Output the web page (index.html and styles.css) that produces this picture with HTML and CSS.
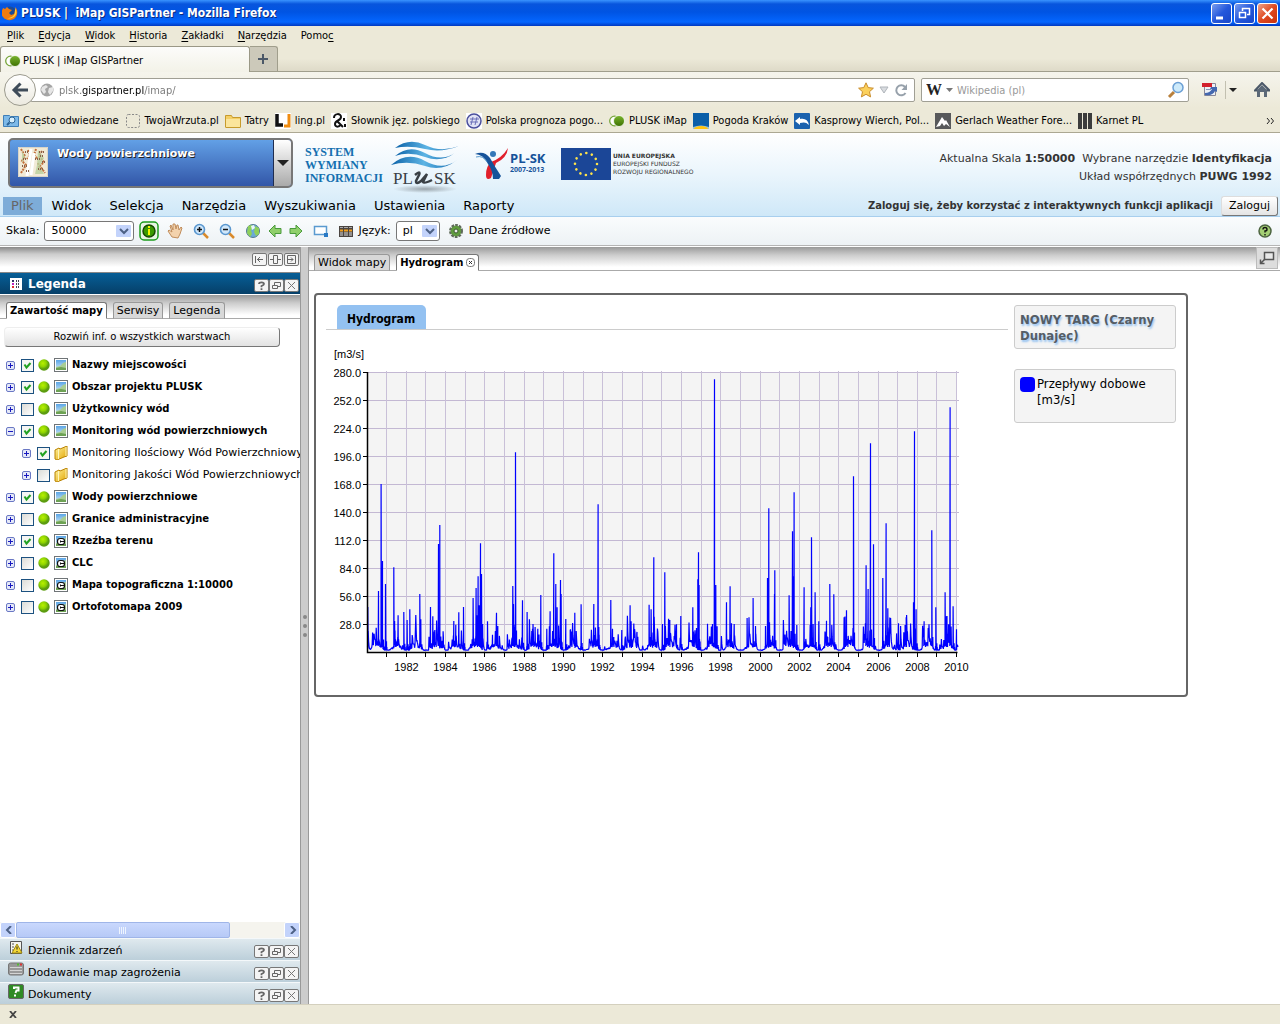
FILE: index.html
```html
<!DOCTYPE html>
<html lang="pl">
<head>
<meta charset="utf-8">
<title>PLUSK | iMap GISPartner</title>
<link rel="stylesheet" href="styles.css">
</head>
<body>
<svg class="sprite" aria-hidden="true">
  <defs>
    <linearGradient id="gGreen" x1="0" x2="0" y1="0" y2="1"><stop offset="0" stop-color="#7bb52f"/><stop offset="1" stop-color="#3c7000"/></linearGradient>
    <linearGradient id="gSky" x1="0" x2="0" y1="0" y2="1"><stop offset="0" stop-color="#5aa5e6"/><stop offset="1" stop-color="#d8ecf8"/></linearGradient>
    <linearGradient id="gGold" x1="0" x2="1" y1="0" y2="1"><stop offset="0" stop-color="#fff3a0"/><stop offset="1" stop-color="#e2a400"/></linearGradient>
    <linearGradient id="gBlue" x1="0" x2="1"><stop offset="0" stop-color="#0b62a8"/><stop offset=".5" stop-color="#5db4e4"/><stop offset="1" stop-color="#0e67ad"/></linearGradient>
    <radialGradient id="gBall" cx=".4" cy=".35"><stop offset="0" stop-color="#b8f000"/><stop offset=".6" stop-color="#8fd400"/><stop offset="1" stop-color="#5c9c10"/></radialGradient>
    <radialGradient id="gShade"><stop offset="0" stop-color="#9aa5ac"/><stop offset="1" stop-color="#9aa5ac" stop-opacity="0"/></radialGradient>
  </defs>
  <symbol id="imap" viewBox="0 0 16 16"><circle cx="5.500" cy="8" r="4.800" fill="#fff" stroke="#78a63c" stroke-width="1.300"/><circle cx="10" cy="8" r="5.500" fill="url(#gGreen)" stroke="#fff" stroke-width=".8"/></symbol>
  <symbol id="firefox" viewBox="0 0 16 16"><circle cx="8" cy="8" r="6.500" fill="#1c4c96"/><path d="M1 3l2 1 2-2 2 2 3 1-2 2-1 1 2 2 3-1 1-4 1 1-1-4c3 2 3 8 0 11s-9 3-12-1S0 6 1 3z" fill="#f07c12"/><path d="M13 3c2 3 2 6 0 8s-5 3-8 2c4 0 7-2 8-5z" fill="#ffcf3a"/></symbol>
  <symbol id="folder" viewBox="0 0 16 16"><path d="M.5 14V2.500h6l1 2h8V14q0 .5-.5.5H1q-.5 0-.5-.5z" fill="#f4cf66" stroke="#c79b2c"/><path d="M1 6h14v8H1z" fill="#fbe59b"/></symbol>
  <symbol id="plus" viewBox="0 0 9 9"><rect x=".5" y=".5" width="8" height="8" rx="1.500" fill="#e4e8f8" stroke="#6a78c4"/><path d="M2 4.500h5M4.500 2v5" stroke="#1818c0"/></symbol>
  <symbol id="minus" viewBox="0 0 9 9"><rect x=".5" y=".5" width="8" height="8" rx="1.500" fill="#e4e8f8" stroke="#6a78c4"/><path d="M2 4.500h5" stroke="#1818c0"/></symbol>
  <symbol id="ball" viewBox="0 0 12 12"><circle cx="6" cy="6" r="5.700" fill="url(#gBall)"/></symbol>
  <symbol id="pic" viewBox="0 0 14 14"><rect x=".5" y=".5" width="13" height="13" fill="#fff" stroke="#6f7477"/><path d="M2 2h10v10H2z" fill="url(#gSky)"/><path d="M2 9l4-1 3-3 3-1v8H2z" fill="#a9cd94"/><path d="M2 10l5-1 5 1v2H2z" fill="#6da254"/></symbol>
  <symbol id="wms" viewBox="0 0 14 14"><use href="#pic"/><rect x="3.500" y="4.500" width="7" height="6" rx="2.500" fill="#fff" stroke="#111" stroke-width="1.200"/><path d="M6.500 7.500H11M6.500 6.500v2" stroke="#111"/></symbol>
  <symbol id="dir" viewBox="0 0 14 14"><path d="M1 4l4-2 1 1 7-3v10l-3 1-7 3-2-1z" fill="url(#gGold)" stroke="#b98200"/><path d="M4.500 3v10M12 1v9" stroke="#fff6b8"/></symbol>
  <symbol id="help" viewBox="0 0 15 13"><rect x=".5" y=".5" width="14" height="12" rx="1.500" fill="#f4f4f4" stroke="#777"/><path d="M5 5Q5 3.300 7.500 3.300T10 5Q10 6 7.500 7v1.300M7.500 9.300v1.700" stroke="#666" stroke-width="1.800" fill="none"/></symbol>
  <symbol id="float" viewBox="0 0 15 13"><rect x=".5" y=".5" width="14" height="12" rx="1.500" fill="#f4f4f4" stroke="#777"/><path d="M5.500 6V3.500h6v4H9M3.500 6.500h5v3h-5z" stroke="#666" fill="none"/></symbol>
  <symbol id="close" viewBox="0 0 15 13"><rect x=".5" y=".5" width="14" height="12" rx="1.500" fill="#f4f4f4" stroke="#777"/><path d="M4 3l7 7M11 3l-7 7" stroke="#777"/></symbol>
  <symbol id="lens" viewBox="0 0 16 16"><path d="M10 10l5 5" stroke="#d98a2c" stroke-width="2.500"/><circle cx="6.500" cy="6.500" r="5" fill="#cfe7fb" stroke="#5a97cf" stroke-width="1.600"/></symbol>
</svg>

<header class="browser">
  <div class="titlebar">
    <svg width="16" height="16"><use href="#firefox"/></svg>
    <span class="wintitle">PLUSK | &nbsp;iMap GISPartner - Mozilla Firefox</span>
    <button class="win" aria-label="Minimalizuj"><svg width="19" height="19"><path d="M4 14h7" stroke="#fff" stroke-width="3"/></svg></button>
    <button class="win" aria-label="Przywróć"><svg width="19" height="19"><path d="M7.500 7V4.500h7v6H12M4.500 8.500h6v5h-6z" fill="none" stroke="#fff" stroke-width="1.500"/></svg></button>
    <button class="win quit" aria-label="Zamknij"><svg width="19" height="19"><path d="M4.500 4.500l10 10M14.500 4.500l-10 10" stroke="#fff" stroke-width="2.200"/></svg></button>
  </div>
  <nav class="ffmenu">
    <a href="#"><u>P</u>lik</a><a href="#"><u>E</u>dycja</a><a href="#"><u>W</u>idok</a><a href="#"><u>H</u>istoria</a><a href="#"><u>Z</u>akładki</a><a href="#"><u>N</u>arzędzia</a><a href="#">Pomo<u>c</u></a>
  </nav>
  <div class="fftabs">
    <button class="fftab"><svg width="16" height="16"><use href="#imap"/></svg>PLUSK | iMap GISPartner</button>
    <button class="newtab" aria-label="Nowa karta"><svg width="12" height="12"><path d="M1 6h10M6 1v10" stroke="#4b5868" stroke-width="2"/></svg></button>
  </div>
  <div class="navbar">
    <button class="back" aria-label="Wstecz"><svg width="18" height="18"><path d="M9.500 2.500L3 9l6.500 6.500M3.500 9H17" fill="none" stroke="#3e4b59" stroke-width="3"/></svg></button>
    <div class="urlbar">
      <svg width="14" height="14"><circle cx="7" cy="7" r="6.500" fill="#a5a5a5"/><path d="M2 4l4-2 2 2-3 2 1 3-2 2-3-4zM9 5l4-1v4l-3 4-2-3z" fill="#e6e6e6"/></svg>
      <input class="url" type="text" aria-label="Adres" value="plsk.gispartner.pl/imap/">
      <svg width="16" height="16"><path d="M8 .8l2.200 4.800 5.200.6-3.900 3.500 1.100 5.200L8 12.300l-4.600 2.600 1.100-5.200L.6 6.200l5.200-.6z" fill="#fbd05c" stroke="#c98d2c"/></svg>
      <svg width="10" height="16"><path d="M1 5h8L5 11z" fill="#d9dce0" stroke="#b0b5bb"/></svg>
      <svg width="14" height="14"><path d="M11.500 10A5 5 0 1 1 11 4" fill="none" stroke="#97a1ab" stroke-width="2"/><path d="M13 1v6H7.500z" fill="#97a1ab"/></svg>
    </div>
    <div class="search">
      <svg width="16" height="16"><text x="0" y="13" class="wiki">W</text></svg>
      <svg width="7" height="5"><path d="M0 0h7L3.500 4z" fill="#777"/></svg>
      <input class="query" type="text" aria-label="Szukaj" placeholder="Wikipedia (pl)">
      <svg width="18" height="18"><path d="M7 11l-5 5" stroke="#b9803c" stroke-width="3"/><circle cx="11" cy="6.500" r="5" fill="#cdeafa" stroke="#6b9fd4" stroke-width="1.500"/></svg>
    </div>
    <svg class="pdf" width="16" height="16"><path d="M2.500 1.500h11v12h-11z" fill="#eef1f6" stroke="#889"/><path d="M0 1h10v4H0z" fill="#d2202c"/><path d="M4 7.500h5" stroke="#8898b8"/><path d="M3 11q5 0 7-4H8l1-2h6v5l-2-1q-2 5-10 4z" fill="#4468b0"/></svg>
    <svg class="drop" width="12" height="18"><path d="M.5 0v18" stroke="#c2c0b0"/><path d="M4 7h8l-4 4z" fill="#222"/></svg>
    <svg class="home" width="16" height="16"><path d="M8 1l7.500 7.500H1z" fill="none" stroke="#4b5868" stroke-width="2"/><path d="M3 8l5-5 5 5v7h-3v-5H6v5H3z" fill="#5b6877"/></svg>
  </div>
  <nav class="bookmarks">
    <a href="#"><svg width="16" height="16"><path d="M.5 13.500v-11h6l1 1h8v10z" fill="#7db9e8" stroke="#3f7fb8"/><circle cx="9" cy="7" r="3" fill="#d8effc" stroke="#2c6496"/><path d="M6.500 9.500L4 12" stroke="#2c6496" stroke-width="2"/></svg><span>Często odwiedzane</span></a>
    <a href="#"><svg width="16" height="16"><rect x="1.500" y="1.500" width="13" height="13" rx="2" fill="none" stroke="#888" stroke-dasharray="2 1.500"/></svg><span>TwojaWrzuta.pl</span></a>
    <a href="#"><svg width="16" height="16"><use href="#folder"/></svg><span>Tatry</span></a>
    <a href="#"><svg width="16" height="16"><path fill="#fff" d="M0 0h16v16H0z"/><path d="M2 1v11h6" fill="none" stroke="#111" stroke-width="3.500"/><path d="M14 1v12H9" fill="none" stroke="#f08c10" stroke-width="3"/></svg><span>ling.pl</span></a>
    <a href="#"><svg width="16" height="16"><path fill="#fff" d="M0 0h16v16H0z"/><path d="M3 5c0-5 7-5 7-1S4 7 4 11s5 3 6 0M6 8l6 6M13 5v3M14 11v3" fill="none" stroke="#111" stroke-width="2"/></svg><span>Słownik jęz. polskiego</span></a>
    <a href="#"><svg width="16" height="16"><path fill="#fff" d="M0 0h16v16H0z"/><circle cx="8" cy="8" r="7" fill="#e0e2f4" stroke="#4a4f9c" stroke-width="1.500"/><path d="M4 6h9M4 9h8M7 4l-2 8M11 4l-2 8" stroke="#6a6fb8"/></svg><span>Polska prognoza pogo...</span></a>
    <a href="#"><svg width="16" height="16"><use href="#imap"/></svg><span>PLUSK iMap</span></a>
    <a href="#"><svg width="16" height="16"><path fill="#0b5fa8" d="M0 0h16v16H0z"/><path fill="#9cc3d8" d="M0 14q8-3 16 0v2H0z"/><ellipse cx="8" cy="16" rx="7" ry="3" fill="#ffc410"/></svg><span>Pogoda Kraków</span></a>
    <a href="#"><svg width="16" height="16"><rect width="16" height="16" rx="1" fill="#1a62ae"/><path d="M1 8l5-4v2c5-1 8 1 9 6-3-3-5-3-9-2v2z" fill="#fff"/></svg><span>Kasprowy Wierch, Pol...</span></a>
    <a href="#"><svg width="16" height="16"><path fill="#58595b" d="M0 0h16v16H0z"/><path d="M1 14l6-10 3 4 1-1 4 7-4-3-2 2-2-3-2 3z" fill="#fff"/></svg><span>Gerlach Weather Fore...</span></a>
    <a href="#"><svg width="14" height="16"><path d="M0 0h4v16H0zM5 0h4v16H5zM10 0h4v16h-4z" fill="#3c3c3c"/></svg><span>Karnet PL</span></a>
    <button class="more" aria-label="Więcej zakładek"><svg width="8" height="6"><path d="M1 0l2.500 3L1 6M5 0l2.500 3L5 6" fill="none" stroke="#222"/></svg></button>
  </nav>
</header>

<div class="app">
  <header class="apphead">
    <div class="brand">
      <button class="theme">
        <span class="themeface"><svg class="thumb" width="30" height="30"><path fill="#f1ead6" d="M0 0h30v30H0z"/><path d="M3 2l4 7-3 5 4 4-5 8M24 4l-3 5 5 6-4 4 5 7M18 2l-2 6 4 4M10 3l2 5-3 4M20 16l3 9" fill="none" stroke="#c2703c" stroke-width="2" stroke-dasharray="2 1"/><path d="M20 3l6 8-4 8 4 8h-9l2-9zM4 4l3 6-3 6z" fill="#b9cf9c" opacity=".8"/><path d="M13 2l-4 27M16 6l-3 22" stroke="#fff" stroke-width="3"/><path d="M7 5h3M5 12h3M22 9h3M20 22h5M8 24h3M4 19h5M24 15h3M17 12h5M21 5h5" stroke="#8a6048" stroke-dasharray="1 1" stroke-width="2"/><path d="M.5.500h29v29H.5z" fill="none" stroke="#d8d4c8"/></svg><b>Wody powierzchniowe</b></span>
        <span class="themearrow"><svg width="12" height="6"><path d="M0 0h12L6 6z" fill="#222"/></svg></span>
      </button>
      <p class="motto">SYSTEM<br>WYMIANY<br>INFORMACJI</p>
      <svg class="plusk" width="72" height="52" role="img" aria-label="PLUSK">
        <g fill="url(#gBlue)"><path d="M4 7Q18-4 34 4t34 1Q50 12 34 8T4 7z"/><path d="M4 15Q18 3 34 12t30 0q-14 10-30 4T4 15z"/><path d="M0 24Q16 10 34 20t32-1q-15 12-32 6T0 24z"/></g>
        <text x="2" y="43" class="lpl">PL</text><text x="43" y="43" class="lpl">SK</text><path d="M24 34q6-5 4 0l-3 6q0 4 5 0l6-7-4 8q1 2 9-2" fill="none" stroke="#3a4045" stroke-width="2.500"/>
        <ellipse cx="34" cy="48" rx="32" ry="4" fill="url(#gShade)"/>
      </svg>
      <svg class="plsk" width="72" height="36" role="img" aria-label="PL-SK 2007-2013">
        <path d="M33 2q-1 10-12 15-2 6-5 15-5 3-5-3 0-9 5-13 11-4 17-14z" fill="#e1202c"/><path d="M0 8q9-4 15 4 5 9 11 18l-2 3h-6q0-8-5-15Q8 8 0 8z" fill="#16539a"/><circle cx="18" cy="8" r="3" fill="#3478b8"/><path d="M1 11q7-2 11 5" fill="none" stroke="#5a9acc"/>
        <text x="35" y="17" class="lsk">PL-SK</text><text x="35" y="26" class="lyr">2007-2013</text>
      </svg>
      <svg class="eu" width="140" height="32" role="img" aria-label="Unia Europejska">
        <path fill="#1b4697" d="M0 0h50v32H0z"/><circle cx="25" cy="16" r="11" fill="none" stroke="#ffe34a" stroke-width="2.600" stroke-linecap="round" stroke-dasharray=".01 5.750"/>
        <text x="52" y="10" class="leu b">UNIA EUROPEJSKA</text><text x="52" y="18" class="leu">EUROPEJSKI FUNDUSZ</text><text x="52" y="26" class="leu">ROZWOJU REGIONALNEGO</text>
      </svg>
      <div class="status">
        <p>Aktualna Skala <b>1:50000</b>&nbsp; Wybrane narzędzie <b>Identyfikacja</b></p>
        <p>Układ współrzędnych <b>PUWG 1992</b></p>
      </div>
    </div>
    <div class="menurow">
      <nav class="appmenu"><a href="#" class="on">Plik</a><a href="#">Widok</a><a href="#">Selekcja</a><a href="#">Narzędzia</a><a href="#">Wyszukiwania</a><a href="#">Ustawienia</a><a href="#">Raporty</a></nav>
      <b class="notice">Zaloguj się, żeby korzystać z interaktywnych funkcji aplikacji</b>
      <button class="login">Zaloguj</button>
    </div>
  </header>

  <div class="tools">
    <label for="scale">Skala:</label>
    <select id="scale" class="scale"><option>50000</option></select>
    <button class="tool active" aria-label="Identyfikacja"><svg width="20" height="20"><rect x="1" y="1" width="18" height="18" rx="4" fill="#e8f6e4" stroke="#1c9c1c" stroke-width="1.500"/><circle cx="10" cy="10" r="6" fill="#3a9a00" stroke="#164800" stroke-width="1.500"/><path d="M10 5v2M10 8v6" stroke="#f4f400" stroke-width="2"/></svg></button>
    <button class="tool" aria-label="Przesuń"><svg width="16" height="16"><path d="M5 14L1 8l1-1 3 2-2-6 1-1 2 5V1h2l1 5 1-4h1l1 5 2-3 1 1-2 6-2 4z" fill="#f3d2ac" stroke="#c08d5c"/></svg></button>
    <button class="tool" aria-label="Powiększ"><svg width="16" height="16"><use href="#lens"/><path d="M4 6.500h5M6.500 4v5" stroke="#111" stroke-width="1.500"/></svg></button>
    <button class="tool" aria-label="Pomniejsz"><svg width="16" height="16"><use href="#lens"/><path d="M4 6.500h5" stroke="#111" stroke-width="1.500"/></svg></button>
    <button class="tool near" aria-label="Cały zasięg"><svg width="16" height="16"><circle cx="8" cy="8" r="6.500" fill="#6aa9d8" stroke="#557b90"/><path d="M3 3l4-1 2 3-3 2 1 4-2 3-3-4zM10 3l4 2v6l-3 2-2-4z" fill="#8fd05a"/><path d="M6 3l3-1 1 3-3 2z" fill="#e8f4fc"/></svg></button>
    <button class="tool near" aria-label="Poprzedni"><svg width="14" height="14"><path d="M1 7l6-6v3.500h6v5H7V13z" fill="#8fcf6a" stroke="#4a9a3c"/></svg></button>
    <button class="tool" aria-label="Następny"><svg width="14" height="14"><path d="M13 7L7 1v3.500H1v5h6V13z" fill="#8fcf6a" stroke="#4a9a3c"/></svg></button>
    <button class="tool" aria-label="Zaznacz"><svg width="16" height="14"><path d="M1.500 2.500h12v8h-12z" fill="#fff" stroke="#5a9ad0" stroke-width="1.500"/><path d="M11 9h4v4h-4z" fill="#2a7ac4"/></svg></button>
    <button class="tool last" aria-label="Tabela"><svg width="14" height="12"><path d="M0 1h14v11H0z" fill="#4a4440"/><path d="M1 2.500h12" stroke="#aaa"/><path d="M1 4.500h12v2H1z" fill="#f0a020"/><path d="M1 8h12M1 10h12" stroke="#ddd"/><path d="M4.500 2v10M9.500 2v10" stroke="#4a4440"/></svg></button>
    <label for="lang">Język:</label>
    <select id="lang" class="lang"><option>pl</option></select>
    <button class="source"><svg width="16" height="16"><circle cx="8" cy="8" r="5.500" fill="#6aa843" stroke="#5f6a5a" stroke-width="3" stroke-dasharray="2.500 1"/><circle cx="8" cy="8" r="5" fill="#5f9c3e"/><circle cx="8" cy="8" r="2" fill="#eee" stroke="#3d5a30"/></svg>Dane źródłowe</button>
    <button class="about" aria-label="Pomoc"><svg width="14" height="14"><circle cx="7" cy="7" r="6" fill="#a4cf74" stroke="#4d6440" stroke-width="1.500"/><path d="M5 5.500Q5 3.500 7 3.500T9 5.500Q9 7 7 7v1.500M7 10v1.500" fill="none" stroke="#111" stroke-width="1.400"/></svg></button>
  </div>

  <div class="work">
    <aside class="side">
      <div class="sizebar">
        <button aria-label="Zwiń"><svg width="15" height="13"><rect x=".5" y=".5" width="14" height="12" rx="1.500" fill="#f4f4f4" stroke="#777"/><path d="M3.500 3v7M5 6.500h6M8 4L5.500 6.500 8 9" stroke="#666" fill="none"/></svg></button>
        <button aria-label="Dopasuj"><svg width="15" height="13"><rect x=".5" y=".5" width="14" height="12" rx="1.500" fill="#f4f4f4" stroke="#777"/><path d="M5.500 2.500h4v8h-4zM2 6.500h3M10 6.500h3" stroke="#666" fill="none"/></svg></button>
        <button aria-label="Rozwiń"><svg width="15" height="13"><rect x=".5" y=".5" width="14" height="12" rx="1.500" fill="#f4f4f4" stroke="#777"/><path d="M3.500 2.500h8v8h-8zM4 6.500h5M7 4.500l2 2-2 2" stroke="#666" fill="none"/></svg></button>
      </div>
      <div class="panelhead">
        <svg width="12" height="12"><path fill="#fff" d="M0 0h12v12H0z"/><path d="M2 3h2" stroke="#336" stroke-width="2"/><path d="M2 6h2" stroke="#c020c0" stroke-width="2"/><path d="M2 9h2" stroke="#e03030" stroke-width="2"/><path d="M6 3h4M6 6h4M6 9h4" stroke="#445" stroke-dasharray="1 1" stroke-width="2"/></svg>
        <h2>Legenda</h2>
        <span class="ctl"><button aria-label="Pomoc"><svg width="15" height="13"><use href="#help"/></svg></button><button aria-label="Odłącz"><svg width="15" height="13"><use href="#float"/></svg></button><button aria-label="Zamknij"><svg width="15" height="13"><use href="#close"/></svg></button></span>
      </div>
      <div class="tabs sidetabs"><button class="tab current">Zawartość mapy</button><button class="tab">Serwisy</button><button class="tab">Legenda</button></div>
      <button class="expand">Rozwiń inf. o wszystkich warstwach</button>
      <ul class="tree">
        <li><svg width="9" height="9"><use href="#plus"/></svg><label><input type="checkbox" checked><svg width="12" height="12"><use href="#ball"/></svg><svg width="14" height="14"><use href="#pic"/></svg>Nazwy miejscowości</label></li>
        <li><svg width="9" height="9"><use href="#plus"/></svg><label><input type="checkbox" checked><svg width="12" height="12"><use href="#ball"/></svg><svg width="14" height="14"><use href="#pic"/></svg>Obszar projektu PLUSK</label></li>
        <li><svg width="9" height="9"><use href="#plus"/></svg><label><input type="checkbox"><svg width="12" height="12"><use href="#ball"/></svg><svg width="14" height="14"><use href="#pic"/></svg>Użytkownicy wód</label></li>
        <li><svg width="9" height="9"><use href="#minus"/></svg><label><input type="checkbox" checked><svg width="12" height="12"><use href="#ball"/></svg><svg width="14" height="14"><use href="#pic"/></svg>Monitoring wód powierzchniowych</label></li>
        <li class="sub"><svg width="9" height="9"><use href="#plus"/></svg><label><input type="checkbox" checked><svg width="14" height="14"><use href="#dir"/></svg>Monitoring Ilościowy Wód Powierzchniowych</label></li>
        <li class="sub"><svg width="9" height="9"><use href="#plus"/></svg><label><input type="checkbox"><svg width="14" height="14"><use href="#dir"/></svg>Monitoring Jakości Wód Powierzchniowych</label></li>
        <li><svg width="9" height="9"><use href="#plus"/></svg><label><input type="checkbox" checked><svg width="12" height="12"><use href="#ball"/></svg><svg width="14" height="14"><use href="#pic"/></svg>Wody powierzchniowe</label></li>
        <li><svg width="9" height="9"><use href="#plus"/></svg><label><input type="checkbox"><svg width="12" height="12"><use href="#ball"/></svg><svg width="14" height="14"><use href="#pic"/></svg>Granice administracyjne</label></li>
        <li><svg width="9" height="9"><use href="#plus"/></svg><label><input type="checkbox" checked><svg width="12" height="12"><use href="#ball"/></svg><svg width="14" height="14"><use href="#wms"/></svg>Rzeźba terenu</label></li>
        <li><svg width="9" height="9"><use href="#plus"/></svg><label><input type="checkbox"><svg width="12" height="12"><use href="#ball"/></svg><svg width="14" height="14"><use href="#wms"/></svg>CLC</label></li>
        <li><svg width="9" height="9"><use href="#plus"/></svg><label><input type="checkbox"><svg width="12" height="12"><use href="#ball"/></svg><svg width="14" height="14"><use href="#wms"/></svg>Mapa topograficzna 1:10000</label></li>
        <li><svg width="9" height="9"><use href="#plus"/></svg><label><input type="checkbox"><svg width="12" height="12"><use href="#ball"/></svg><svg width="14" height="14"><use href="#wms"/></svg>Ortofotomapa 2009</label></li>
      </ul>
      <div class="hscroll">
        <button class="sbtn" aria-label="Przewiń w lewo"><svg width="8" height="8"><path d="M6 0L2 4l4 4" fill="none" stroke="#4d6185" stroke-width="2"/></svg></button>
        <div class="track"><div class="knob"><svg width="8" height="7"><path d="M.5 0v7M2.500 0v7M4.500 0v7M6.500 0v7" stroke="#eef4fe"/></svg></div></div>
        <button class="sbtn" aria-label="Przewiń w prawo"><svg width="8" height="8"><path d="M2 0l4 4-4 4" fill="none" stroke="#4d6185" stroke-width="2"/></svg></button>
      </div>
      <div class="fold"><svg width="16" height="16"><path d="M2.500 1.500h11v12h-11z" fill="#f4f4ee" stroke="#555"/><path d="M4 4h2M4 7h2M4 10h2" stroke="#555"/><path d="M9 4l5 9H4z" fill="#f4d838" stroke="#a08a10"/><path d="M9 6.500v3M9 11v1" stroke="#222"/></svg><h3>Dziennik zdarzeń</h3><span class="ctl"><button aria-label="Pomoc"><svg width="15" height="13"><use href="#help"/></svg></button><button aria-label="Odłącz"><svg width="15" height="13"><use href="#float"/></svg></button><button aria-label="Zamknij"><svg width="15" height="13"><use href="#close"/></svg></button></span></div>
      <div class="fold"><svg width="16" height="16"><rect x=".5" y="1" width="15" height="12" rx="2" fill="#999" stroke="#777"/><path d="M2 5.500h12M2 8.500h12M2 11.500h12" stroke="#d4d4d4"/><path d="M9 2.500h2" stroke="#5b3" stroke-width="2"/><path d="M12 2.500h2" stroke="#d33" stroke-width="2"/></svg><h3>Dodawanie map zagrożenia powodziowego</h3><span class="ctl"><button aria-label="Pomoc"><svg width="15" height="13"><use href="#help"/></svg></button><button aria-label="Odłącz"><svg width="15" height="13"><use href="#float"/></svg></button><button aria-label="Zamknij"><svg width="15" height="13"><use href="#close"/></svg></button></span></div>
      <div class="fold"><svg width="16" height="16"><rect x=".5" y=".5" width="15" height="14" rx="1.500" fill="#2f8a24" stroke="#666"/><path d="M6 5V3.500h4.500V6.500H8.500L7.500 9M7 10.500v2" fill="none" stroke="#fff" stroke-width="2"/></svg><h3>Dokumenty</h3><span class="ctl"><button aria-label="Pomoc"><svg width="15" height="13"><use href="#help"/></svg></button><button aria-label="Odłącz"><svg width="15" height="13"><use href="#float"/></svg></button><button aria-label="Zamknij"><svg width="15" height="13"><use href="#close"/></svg></button></span></div>
    </aside>
    <div class="splitter"><i></i><i></i><i></i></div>
    <main class="content">
      <div class="tabs maintabs"><button class="tab">Widok mapy</button><button class="tab current">Hydrogram<svg width="9" height="9"><rect x=".5" y=".5" width="8" height="8" rx="3" fill="#fff" stroke="#777"/><path d="M3 3l3 3M6 3L3 6" stroke="#333"/></svg></button>
        <button class="map" aria-label="Podgląd"><svg width="20" height="20"><path d="M7.500 4.500h9v7h-9z" fill="#e8e8e8" stroke="#555" stroke-width="1.500"/><path d="M8 11l-4 4M3.500 11.500v4h4" stroke="#555" stroke-width="1.500" fill="none"/></svg></button></div>
      <section class="card">
        <div class="plot">
          <h1><span>Hydrogram</span></h1>
          <svg id="chart" width="650" height="355" role="img" aria-label="Przepływy dobowe [m3/s]"></svg>
        </div>
        <div class="info">
          <h2 class="box">NOWY TARG (Czarny Dunajec)</h2>
          <div class="box key"><i></i><span>Przepływy dobowe [m3/s]</span></div>
        </div>
      </section>
    </main>
  </div>
</div>
<footer class="addons"><button aria-label="Zamknij pasek"><svg width="8" height="7"><path d="M1 0l6 7M7 0L1 7" stroke="#444" stroke-width="1.800"/></svg></button></footer>
<script src="chart.js"></script>
</body>
</html>
```
FILE: styles.css
```css
* { box-sizing: border-box; }
body { margin: 0; min-height: 100vh; display: flex; flex-direction: column; background: #fff; color: #000; font: 11px/14px "DejaVu Sans Condensed", "DejaVu Sans", sans-serif; }
button, input, select { font: inherit; color: inherit; margin: 0; }
button { padding: 0; border: 0; background: none; }
p, h1, h2, h3, ul { margin: 0; padding: 0; }
a { color: inherit; text-decoration: none; }
svg { flex: none; display: block; }
.sprite { position: absolute; width: 0; height: 0; }

/* browser window */
.browser { background: #ece9d8; border-bottom: 1px solid #aca893; }
.titlebar { height: 26px; padding: 0 2px; display: flex; align-items: center; gap: 2px; background: linear-gradient(#3a93ff, #0855dd 4px, #0054e3 12px, #0466ff 22px, #0144d0 25px, #0138c0); }
.wintitle { flex: 1; padding-left: 1px; color: #fff; font: bold 12px/18px "DejaVu Sans Condensed", sans-serif; text-shadow: 1px 1px #0a2a80; }
.win { width: 21px; height: 21px; border: 1px solid #fff; border-radius: 3px; background: linear-gradient(135deg, #7a9dee, #2458dc 50%, #1846c8); }
.quit { background: linear-gradient(135deg, #eda38a, #e04a20 50%, #c8320c); }
.ffmenu { height: 20px; padding: 3px 7px 0; display: flex; gap: 14px; }
.ffmenu u { text-underline-offset: 2px; }
.fftabs { height: 26px; display: flex; border-bottom: 1px solid #a09e8c; background: linear-gradient(#ece9d8 50%, #dedac8); }
.fftab { width: 250px; height: 26px; padding: 2px 4px 0; display: flex; align-items: center; gap: 2px; border: 1px solid #9a9886; border-bottom: 0; border-radius: 3px 3px 0 0; background: linear-gradient(#fcfcfa, #f3f2e8); }
.newtab { width: 28px; height: 25px; padding-left: 7px; border: 1px solid #a09e8c; border-width: 1px 1px 0 0; border-radius: 0 3px 0 0; background: #ccc9ba; }
.navbar { height: 36px; padding: 0 10px 0 4px; display: flex; align-items: center; background: linear-gradient(#f5f4ec, #ece9d8); }
.back { width: 32px; height: 32px; padding-left: 6px; border: 1px solid #9b9a8e; border-radius: 50%; background: linear-gradient(#fff, #eceae0); z-index: 1; }
.urlbar, .search { height: 24px; padding: 0 6px; display: flex; align-items: center; gap: 7px; border: 1px solid #a09f94; border-radius: 2px; background: #fff; }
.urlbar { flex: 1; margin-left: -6px; padding-left: 9px; gap: 5px; }
.url { flex: 1; min-width: 0; padding: 2px 0 0; border: 0; color: transparent; background: linear-gradient(90deg, #777 22px, #000 22px, #000 85px, #777 85px); background-clip: text; -webkit-background-clip: text; }
.search { width: 268px; margin-left: 6px; padding: 0 3px 0 4px; gap: 4px; }
.query { flex: 1; min-width: 0; padding: 2px 0 0; border: 0; background: none; }
.query::placeholder { color: #999; opacity: 1; }
.wiki { font: bold 16px "Liberation Serif", serif; fill: #222; }
.pdf { margin-left: 13px; }
.drop { margin-left: 7px; }
.home { margin-left: 17px; }
.bookmarks { height: 24px; padding: 2px 6px 0 3px; display: flex; align-items: center; gap: 6px; white-space: nowrap; }
.bookmarks a { display: flex; align-items: center; gap: 4px; }
.more { margin-left: auto; }
.addons { height: 20px; padding: 6px 9px; display: flex; background: #ece9d8; border-top: 1px solid #d4d0be; }

/* application */
.app { flex: 1; display: flex; flex-direction: column; font-family: "DejaVu Sans", sans-serif; }
.apphead { height: 84px; background: linear-gradient(#fff, #eaf5fc 50%, #cfe8f8); border-bottom: 1px solid #a8cfee; }
.brand { height: 62px; padding: 5px 8px 0; display: flex; align-items: flex-start; }
.theme { width: 285px; height: 50px; display: flex; border: 2px solid #777; border-radius: 5px; background: #3a60b0; overflow: hidden; }
.themeface { flex: 1; align-self: stretch; padding: 7px 8px; display: flex; gap: 9px; color: #fff; text-align: left; text-shadow: 1px 1px #222; background: linear-gradient(#62a0e6, #3256a8); border-right: 1px solid #1f2d50; }
.themearrow { width: 17px; align-self: stretch; display: flex; align-items: center; justify-content: center; background: linear-gradient(#fff, #aaa); }
.motto { margin: 8px 0 0 12px; color: #1470b0; font: bold 12px/13px "Liberation Serif", serif; }
.plusk { margin: 3px 0 0 8px; }
.plsk { margin: 8px 0 0 12px; }
.eu { margin: 10px 0 0 14px; }
.lpl { font: 17px "Liberation Serif", serif; fill: #3a4045; }
.lsk { font: bold 13px "Open Sans", sans-serif; fill: #16539a; }
.lyr { font: bold 7px "Open Sans", sans-serif; fill: #16539a; }
.leu { font: 6px "DejaVu Sans", sans-serif; fill: #333; }
.leu.b { font-weight: bold; }
.status { margin-left: auto; padding-top: 12px; color: #333; line-height: 18px; text-align: right; white-space: nowrap; }
.menurow { height: 21px; padding: 0 2px 0 3px; display: flex; align-items: center; }
.appmenu { flex: 1; display: flex; gap: 2px; font-size: 13px; line-height: 18px; }
.appmenu a { padding: 0 8px; }
.appmenu .on { color: #666; background: #7dacd8; }
.notice { color: #333; font-size: 10px; }
.login { height: 20px; margin-left: 8px; padding: 0 7px; border: 1px solid; border-color: #ddd #777 #777 #ddd; border-radius: 3px; background: linear-gradient(#fff, #e4e4e4); }
.tools { height: 29px; padding: 0 8px 0 6px; display: flex; align-items: center; background: linear-gradient(#fafcfd, #edf2f5); border-bottom: 1px solid #b5b5b5; }
.scale, .lang { height: 20px; margin-left: 5px; padding: 0 6px; border: 1px solid #777; border-radius: 3px; appearance: none; background: #fff url("data:image/svg+xml,%3Csvg xmlns='http://www.w3.org/2000/svg' width='17' height='14'%3E%3Crect width='15' height='12' y='1' rx='1' fill='%23c3d3fb'/%3E%3Cpath d='M4 5l4 4 4-4' fill='none' stroke='%234d6185' stroke-width='2'/%3E%3C/svg%3E") no-repeat right center; }
.scale { width: 90px; margin-right: 5px; }
.lang { width: 44px; margin-right: 8px; }
.tool { margin-right: 10px; }
.tool.active { margin-right: 8px; }
.tool.near { margin-right: 7px; }
.tool.last { margin-right: 5px; }
.source { display: flex; align-items: center; gap: 5px; }
.about { margin-left: auto; }
.work { flex: 1; display: flex; padding-top: 1px; }
.side { width: 300px; display: flex; flex-direction: column; }
.sizebar { height: 25px; padding: 5px 1px; display: flex; justify-content: flex-end; gap: 1px; background: linear-gradient(#888, #ccc 7px, #fff 20px); }
.panelhead { height: 22px; padding: 0 1px 0 10px; display: flex; align-items: center; border-top: 1px solid #888; background: linear-gradient(#075f97, #063f68); color: #fff; }
.panelhead h2 { padding-left: 6px; font-size: 12px; }
.ctl { display: flex; margin-left: auto; padding-top: 3px; }
.tabs { display: flex; align-items: flex-end; gap: 6px; background: linear-gradient(#999, #ccc 8px, #fff 20px); border-bottom: 1px solid #aaa; }
.tab { height: 17px; margin-bottom: -1px; padding: 0 3px; display: flex; align-items: center; gap: 3px; border: 1px solid #999; border-bottom-color: #aaa; border-radius: 3px 3px 0 0; background: #d8d8d8; }
.tab.current { border-color: #777; border-bottom-color: #fff; background: #fff; font-weight: bold; font-size: 10px; }
.sidetabs { height: 24px; margin-top: 1px; padding-left: 6px; }
.expand { width: 276px; height: 20px; margin: 8px 4px 7px; border: 1px solid; border-color: #eee #777 #777 #eee; border-radius: 4px; background: linear-gradient(#fff, #e2e2e2); font-size: 10px; }
.tree { flex: 1; list-style: none; overflow: hidden; font-size: 10px; font-weight: bold; line-height: 22px; white-space: nowrap; }
.tree li { height: 22px; padding-left: 6px; display: flex; align-items: center; gap: 6px; }
.tree label { display: flex; align-items: center; gap: 4px; }
.tree .sub { padding-left: 22px; font-size: 11px; font-weight: normal; }
.tree input { width: 13px; height: 13px; appearance: none; border: 1px solid #1c5180; background: linear-gradient(135deg, #dcdcd7, #fff); }
.tree input:checked { background: #f6f6f4 url("data:image/svg+xml,%3Csvg xmlns='http://www.w3.org/2000/svg' width='11' height='11'%3E%3Cpath d='M2.500 4.500l2 3 4-4.500' fill='none' stroke='%2321a121' stroke-width='2'/%3E%3C/svg%3E"); }
.hscroll { height: 16px; display: flex; background: #f5f4ee; }
.sbtn { width: 16px; padding-left: 4px; border: 1px solid #fff; border-radius: 2px; background: #c3d3fb; }
.track { flex: 1; }
.knob { width: 214px; height: 16px; padding: 4px 102px; border: 1px solid #9fb5e8; border-radius: 2px; background: linear-gradient(#c9d8fd, #b6c9f6); }
.fold { height: 22px; padding: 1px 1px 0 8px; display: flex; gap: 4px; background: linear-gradient(#dfe9ee, #bccfda); border-top: 1px solid #f4f8fa; overflow: hidden; }
.fold h3 { flex: 1; padding: 4px 32px 0 0; font: 11px/14px "DejaVu Sans", sans-serif; overflow: hidden; }
.splitter { width: 9px; display: flex; flex-direction: column; align-items: center; justify-content: center; gap: 5px; background: #ccc; border: 1px solid #999; border-width: 0 1px; }
.splitter i { width: 4px; height: 4px; border-radius: 50%; background: #888; }
.content { flex: 1; min-width: 0; }
.maintabs { height: 24px; padding: 0 2px 0 5px; }
.map { width: 22px; height: 22px; margin-left: auto; align-self: flex-start; border: 1px solid #bbb; background: #ddd; }
.card { max-width: 874px; margin: 22px 5px; padding: 10px; display: flex; gap: 6px; border: 2px solid #666; border-radius: 4px; }
.plot { flex: 1; min-width: 0; }
.plot h1 { height: 25px; padding-left: 11px; border-bottom: 1px solid #ccc; font: bold 12px/28px "DejaVu Sans Condensed", sans-serif; }
.plot h1 span { display: inline-block; height: 24px; padding: 0 11px 0 10px; border-radius: 5px 5px 0 0; background: #93c1f1; }
.info { width: 162px; display: flex; flex-direction: column; gap: 20px; font: 13px/16px "DejaVu Sans Condensed", sans-serif; }
.box { padding: 6px 5px; border: 1px solid #ccc; border-radius: 3px; background: #f4f4f4; }
h2.box { height: 44px; color: #555d65; font: bold 13px/16px "DejaVu Sans Condensed", sans-serif; text-shadow: 1px 2px 2px #93c1f1; }
.key { height: 54px; display: flex; gap: 2px; }
.key i { width: 15px; height: 15px; flex: none; margin-top: 1px; border-radius: 4px; background: #00f; }
.axis { font: 11px "Liberation Sans", sans-serif; }
```
FILE: chart.js
```js
// Daily discharge hydrograph: 1 px per m3/s, 590 px for 30 years.
const NS = 'http://www.w3.org/2000/svg';
const svg = document.getElementById('chart');
const LEFT = 41, BASE = 322, TOP = 42, WIDTH = 590;

function add(tag, attrs, text) {
  const el = document.createElementNS(NS, tag);
  for (const k in attrs) el.setAttribute(k, attrs[k]);
  if (text) el.textContent = text;
  svg.appendChild(el);
}

// Flood peaks as [time, level]; levels count down from 1102, three units per m3/s.
const early = [[174,967],[206,919],[214,598],[218,829],[227,898],[252,848],[265,992],[282,982],[292,1006],[300,974],[330,928],[333,1004],[362,967],[369,995],[386,778],[390,721],[375,1036],[400,1040],[432,1009],[438,1020],[447,983],[461,967],[490,940],[499,910],[505,875],[512,776],[515,868],[508,962],[533,1010],[560,984],[564,1024],[548,1050],[609,904],[611,958],[617,503],[638,947],[652,982],[668,1032],[676,1027],[684,1032],[693,931],[711,1032],[721,980],[732,806],[738,898],[742,968],[752,886],[754,928],[768,1003],[782,1034],[795,984],[814,959],[852,958],[865,659],[867,1027],[903,946],[908,1032],[936,1036],[961,962],[964,1010],[981,1045]];
const late = [[58,960],[64,974],[72,818],[98,1018],[105,863],[116,1007],[140,1019],[153,994],[189,968],[200,1030],[206,803],[204,884],[208,901],[233,1017],[248,1018],[254,284],[258,901],[262,1025],[290,953],[301,905],[305,1016],[313,1027],[352,1000],[370,940],[377,1024],[407,1024],[413,880],[417,671],[419,1013],[434,928],[435,857],[478,932],[488,740],[493,623],[491,875],[501,1021],[523,908],[543,968],[545,758],[550,1018],[556,923],[567,1010],[590,1008],[600,898],[612,929],[643,998],[650,977],[671,575],[709,842],[715,913],[722,476],[731,779],[759,880],[769,716],[774,971],[806,1016],[826,1021],[854,440],[851,953],[859,974],[883,1010],[906,737],[918,968],[946,923],[949,995],[961,368],[970,965],[980,1034]];
const peaks = early.map(p => [(p[0] - 174) / 3, (1102 - p[1]) / 3])
  .concat(late.map(p => [(p[0] + 786) / 3, (1102 - p[1]) / 3]));

add('rect', {x: LEFT, y: TOP, width: WIDTH, height: 280, fill: '#f4f4f4'});
for (let i = 1; i <= 10; i++) {
  const y = BASE - 28 * i + .5;
  add('path', {d: `M${LEFT} ${y}h592`, stroke: '#c3b8d3'});
  add('path', {d: `M${LEFT - 4} ${y}h5`, stroke: '#000'});
  add('text', {x: LEFT - 6, y: y + 4, 'text-anchor': 'end', class: 'axis'}, (28 * i).toFixed(1));
}
for (let i = 0; i < 30; i++) {
  const x = Math.round(60 + i * 19.66) + .5;
  add('path', {d: `M${x} ${TOP - 1}V${BASE}`, stroke: '#c9c0d8'});
  add('path', {d: `M${x} ${BASE}v5`, stroke: '#000'});
  if (i % 2) add('text', {x: x, y: BASE + 19, 'text-anchor': 'middle', class: 'axis'}, String(1981 + i));
}
add('text', {x: 8, y: 28, class: 'axis'}, '[m3/s]');

// Low flow between the floods, with a winter minimum each year.
let seed = 77;
const rnd = () => (seed = (seed * 16807) % 2147483647) / 2147483647;
let wet = 4;
const pts = [];
for (let t = 0; t <= 589; t += .4) {
  const season = Math.max(.15, Math.sin(((t - 19) / 19.66 - .25) * 2 * Math.PI) + .9) / 1.9;
  wet *= .45;
  if (rnd() < .42 * season) wet = Math.max(wet, rnd() * rnd() * 36);
  pts.push([t, 1.5 + 2 * season + wet + rnd() * 6 * season]);
}
for (const [x, v] of peaks) {
  pts.push([x - .3, 6], [x, v], [x + .3, 7], [x + 1, 5 + v / 12], [x + 1.4, 5]);
}
pts.sort((a, b) => a[0] - b[0]);
add('path', {
  d: 'M' + pts.map(p => (LEFT + .8 + p[0]).toFixed(1) + ' ' + (BASE - p[1]).toFixed(1)).join('L'),
  fill: 'none', stroke: '#00f', 'stroke-width': 1.2, 'stroke-linejoin': 'bevel'
});
add('path', {d: `M${LEFT + .5} ${TOP}v280.500h590`, fill: 'none', stroke: '#000', 'stroke-width': 1.500});
```
